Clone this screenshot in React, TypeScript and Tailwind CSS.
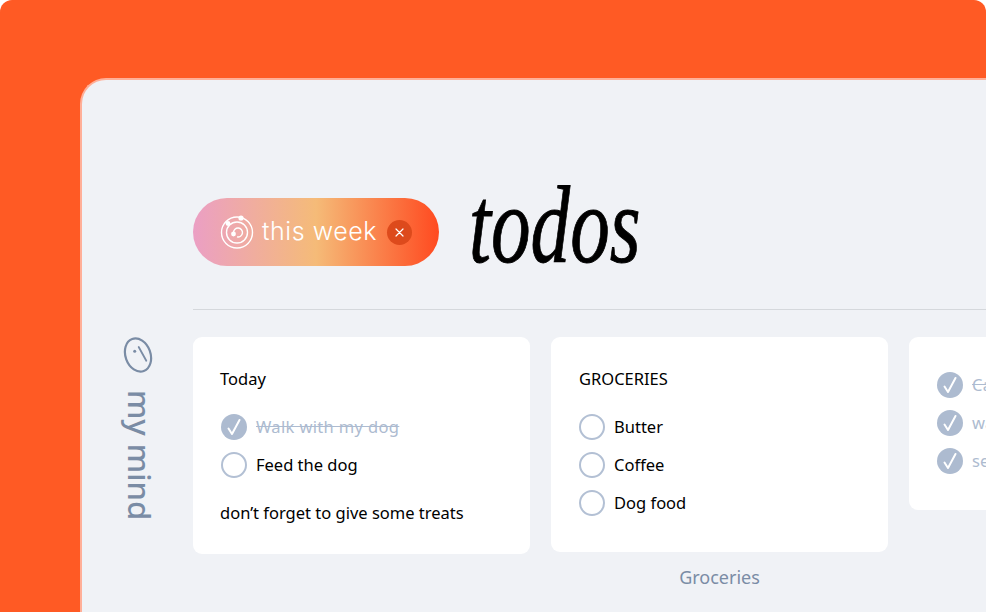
type Todo = { label: string; done?: boolean; struck?: boolean };

const Check = ({ done }: { done?: boolean }) =>
  done ? (
    <span className="flex h-[26px] w-[26px] shrink-0 items-center justify-center rounded-full bg-[#adbbd0]">
      <svg width="16" height="18" viewBox="0 0 16 18" fill="none" stroke="white" strokeWidth="2" strokeLinecap="round" strokeLinejoin="round">
        <path d="M2.5 10.5 L6 16 L13.5 2" />
      </svg>
    </span>
  ) : (
    <span className="h-[26px] w-[26px] shrink-0 rounded-full border-2 border-[#b3c0d4] bg-white" />
  );

const TodoRow = ({ label, done, struck = true }: Todo) => (
  <div className="flex h-[26px] items-center gap-[9px]">
    <Check done={done} />
    <span className={done ? (struck ? "text-[#adbbd0] tracking-[0.35px] line-through whitespace-nowrap" : "text-[#adbbd0] whitespace-nowrap") : "text-black whitespace-nowrap"}>{label}</span>
  </div>
);

const OrbitIcon = () => (
  <svg width="34" height="34" viewBox="0 0 34 34" fill="none" stroke="white" strokeWidth="1.4">
    <circle cx="17" cy="17.5" r="15.5" />
    <circle cx="17" cy="17.5" r="10.5" />
    <path d="M13.5 17.5 a4.5 4.5 0 1 1 3.5 4.4" />
    <circle cx="13.5" cy="19" r="2.4" fill="white" stroke="none" />
    <circle cx="8" cy="8.5" r="2.4" fill="white" stroke="none" />
    <circle cx="21" cy="3" r="2.6" fill="white" stroke="none" />
  </svg>
);

const MindIcon = () => (
  <svg width="30" height="36" viewBox="0 0 30 36" fill="none" stroke="#7a8ca5" strokeWidth="2.2" strokeLinecap="round">
    <ellipse cx="15" cy="18" rx="12.5" ry="17" transform="rotate(-20 15 18)" />
    <path d="M15.7 10 L23.3 23.7" strokeWidth="1.8" />
    <circle cx="11.7" cy="14.3" r="1.5" fill="#7a8ca5" stroke="none" />
  </svg>
);

export default function App() {
  return (
    <div className="h-[612px] w-[986px] overflow-hidden bg-white font-['Noto_Sans',sans-serif]">
      <div className="h-full rounded-t-[12px] bg-[#ff5a24] pl-[80px] pt-[78px]">
        <div className="grid h-[534px] grid-cols-[111px_1fr] grid-rows-[230px_1fr] overflow-hidden rounded-tl-[26px] border-l-2 border-t-2 border-[#ffaf98] bg-[#f0f2f6]">
          <div />
          <div className="flex flex-col pt-[118px]">
            <div className="flex items-center gap-[30px]">
              <div className="flex h-[68px] w-[246px] items-center rounded-full bg-[linear-gradient(90deg,#eb9fc4_0%,#f5bb78_50%,#ff4a20_100%)] pl-[27px]">
                <OrbitIcon />
                <span className="ml-[8px] whitespace-nowrap font-['Inter',sans-serif] text-[25px] font-light tracking-[0.55px] text-white">this week</span>
                <span className="ml-[10px] flex h-[25px] w-[25px] shrink-0 items-center justify-center rounded-full bg-[#dd4a1c]">
                  <svg width="9" height="9" viewBox="0 0 9 9" stroke="white" strokeWidth="1.2" strokeLinecap="round">
                    <path d="M1 1 L8 8 M8 1 L1 8" />
                  </svg>
                </span>
              </div>
              <h1 className="-mt-[7px] origin-left scale-x-[0.72] self-start font-['Liberation_Serif',serif] text-[110px] italic leading-[68px] text-black [-webkit-text-stroke:0.9px_black]">todos</h1>
            </div>
            <div className="mt-[43px] h-px bg-[#d5d8dc]" />
          </div>

          <div className="flex flex-col items-center pt-[27px] pr-[1px]">
            <div className="flex flex-col items-center gap-[17px] pl-[1px]">
              <MindIcon />
              <span className="ml-[4px] text-[31px] font-medium leading-none text-[#7a8ca5] [writing-mode:vertical-rl]">my mind</span>
            </div>
          </div>

          <div className="flex items-start gap-[21px] pt-[27px] text-[16.5px]">
            <div className="h-[217px] w-[337px] shrink-0 rounded-[9px] bg-white pl-[28px] pt-[30px]">
              <p className="-ml-px leading-[24px]">Today</p>
              <div className="mt-[23px] flex flex-col gap-[12px]">
                <TodoRow label="Walk with my dog" done />
                <TodoRow label="Feed the dog" />
              </div>
              <p className="-ml-px mt-[23px] whitespace-nowrap leading-[24px]">don’t forget to give some treats</p>
            </div>

            <div className="flex w-[337px] shrink-0 flex-col items-center">
              <div className="h-[215px] w-full rounded-[9px] bg-white pl-[28px] pt-[30px]">
                <p className="leading-[24px]">GROCERIES</p>
                <div className="mt-[23px] flex flex-col gap-[12px]">
                  <TodoRow label="Butter" />
                  <TodoRow label="Coffee" />
                  <TodoRow label="Dog food" />
                </div>
              </div>
              <span className="mt-[12px] text-[18px] text-[#7a8ca5]">Groceries</span>
            </div>

            <div className="h-[173px] w-[337px] shrink-0 rounded-[9px] bg-white pl-[28px] pt-[35px]">
              <div className="flex flex-col gap-[12px]">
                <TodoRow label="Call mom" done />
                <TodoRow label="wash the car" done struck={false} />
                <TodoRow label="send the mail" done struck={false} />
              </div>
            </div>
          </div>
        </div>
      </div>
    </div>
  );
}
